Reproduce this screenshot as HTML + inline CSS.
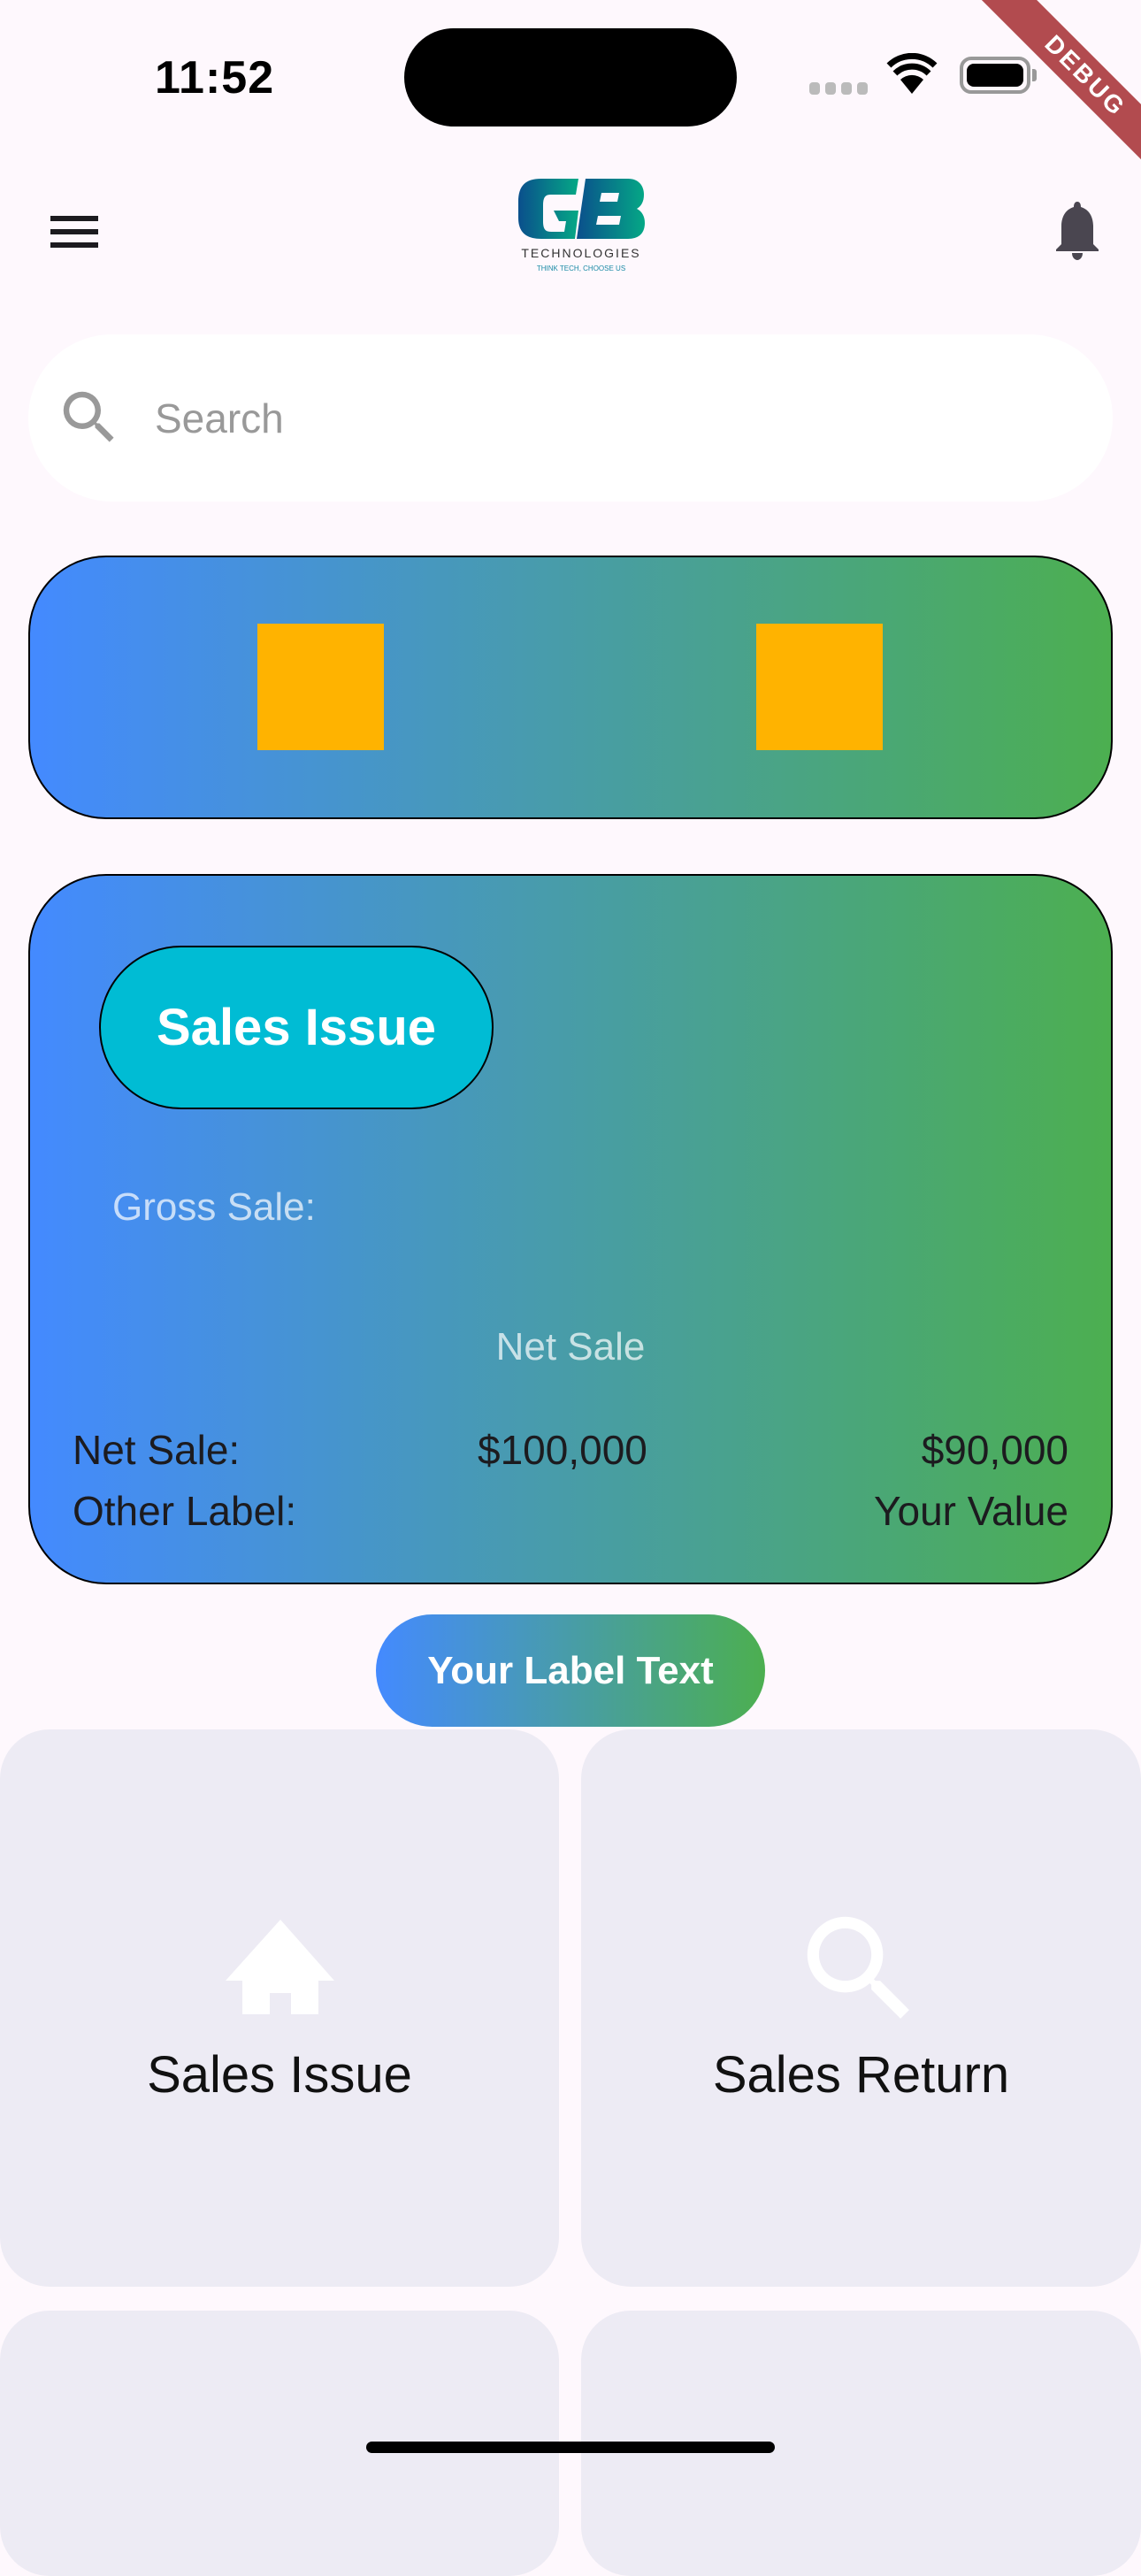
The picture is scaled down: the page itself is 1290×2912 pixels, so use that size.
<!DOCTYPE html>
<html><head><meta charset="utf-8"><style>
*{margin:0;padding:0;box-sizing:border-box}
body{width:1290px;height:2796px;background:#fef8fd;font-family:"Liberation Sans",sans-serif;position:relative;overflow:hidden}
.a{position:absolute}
.grad{background:linear-gradient(90deg,#448aff,#4caf50)}
.tile{position:absolute;background:#edebf4;border-radius:56px}
.tl{position:absolute;width:100%;text-align:center;font-size:58px;color:#111}
</style></head><body>
<div class="a" style="left:175px;top:58px;font-size:52px;font-weight:bold;color:#000;letter-spacing:1px">11:52</div>
<div class="a" style="left:457px;top:32px;width:376px;height:111px;background:#000;border-radius:56px"></div>
<div class="a" style="left:915px;top:93px;width:68px;height:14px;display:flex;gap:6px">
<div style="width:12px;height:14px;background:#bbb;border-radius:4px"></div><div style="width:12px;height:14px;background:#bbb;border-radius:4px"></div><div style="width:12px;height:14px;background:#bbb;border-radius:4px"></div><div style="width:12px;height:14px;background:#bbb;border-radius:4px"></div></div>
<svg class="a" style="left:1002px;top:60px" width="58" height="48" viewBox="0 0 58 48"><path d="M29 46 L16 30 A19 19 0 0 1 42 30 Z" fill="#000"/><path d="M10 23 A27 27 0 0 1 48 23" stroke="#000" stroke-width="7" fill="none"/><path d="M3 14 A37 37 0 0 1 55 14" stroke="#000" stroke-width="7" fill="none"/></svg>
<div class="a" style="left:1085px;top:64px;width:80px;height:42px;border:4px solid #999;border-radius:13px;padding:4px"><div style="width:100%;height:100%;background:#000;border-radius:8px"></div></div>
<div class="a" style="left:1167px;top:78px;width:5px;height:14px;background:#999;border-radius:0 3px 3px 0"></div>
<div class="a" style="left:1077px;top:64px;width:300px;height:44px;background:#b24b4f;transform:rotate(45deg);color:#fff;font-weight:bold;font-size:28px;text-align:center;line-height:44px;letter-spacing:3px">DEBUG</div>
<div class="a" style="left:57px;top:244px;width:54px;height:6px;background:#1c1b1f"></div>
<div class="a" style="left:57px;top:259px;width:54px;height:6px;background:#1c1b1f"></div>
<div class="a" style="left:57px;top:274px;width:54px;height:6px;background:#1c1b1f"></div>
<svg class="a" style="left:582px;top:200px" width="150" height="120" viewBox="0 0 150 120"><defs><linearGradient id="lg" x1="0" x2="1"><stop offset="0" stop-color="#0a4f8c"/><stop offset="1" stop-color="#05a886"/></linearGradient></defs>
<path d="M30 2 H72 L69 20 H40 C34 20 32 24 32 32 V50 C32 60 35 62 42 62 H56 L58 50 H50 L44 38 H72 L68 70 H30 C12 70 4 62 4 46 V28 C4 10 12 2 30 2Z" fill="url(#lg)"/>
<path d="M80 2 H128 C140 2 146 10 146 20 C146 28 143 33 138 36 C144 39 147 45 147 52 C147 64 140 70 128 70 H70 Z M98 18 L96 28 H116 L118 18 Z M94 44 L92 54 H118 L120 44 Z" fill="url(#lg)" fill-rule="evenodd"/>
<text x="75" y="91" font-size="14" text-anchor="middle" fill="#333" letter-spacing="2" font-family="Liberation Sans">TECHNOLOGIES</text>
<text x="75" y="106" font-size="8" text-anchor="middle" fill="#1a8aa6" font-family="Liberation Sans">THINK TECH, CHOOSE US</text></svg>
<svg class="a" style="left:1192px;top:228px" width="53" height="66" viewBox="0 0 53 66"><path d="M26 0 C29 0 30 3 30 6 C40 9 44 18 44 28 V48 L50 54 V56 H2 V54 L8 48 V28 C8 18 12 9 22 6 C22 3 23 0 26 0Z" fill="#4a4650"/><path d="M20 58 H32 C32 64 28 66 26 66 C24 66 20 64 20 58Z" fill="#4a4650"/></svg>
<div class="a" style="left:32px;top:378px;width:1226px;height:189px;background:#fff;border-radius:95px"></div>
<svg class="a" style="left:62px;top:433px" width="78" height="78" viewBox="0 0 24 24"><path d="M15.5 14h-.79l-.28-.27A6.47 6.470 0 0 0 16 9.5 6.5 6.5 0 1 0 9.5 16c1.61 0 3.09-.59 4.23-1.57l.27.28v.79l5 4.99L20.49 19l-4.99-5zm-6 0C7.01 14 5 11.99 5 9.5S7.01 5 9.5 5 14 7.01 14 9.5 11.99 14 9.5 14z" fill="#999"/></svg>
<div class="a" style="left:175px;top:446px;font-size:46px;color:#999">Search</div>
<div class="a grad" style="left:32px;top:628px;width:1226px;height:298px;border:2px solid #000;border-radius:88px"></div>
<div class="a" style="left:291px;top:705px;width:143px;height:143px;background:#ffb300"></div>
<div class="a" style="left:855px;top:705px;width:143px;height:143px;background:#ffb300"></div>
<div class="a grad" style="left:32px;top:988px;width:1226px;height:803px;border:2px solid #000;border-radius:88px"></div>
<div class="a" style="left:112px;top:1069px;width:446px;height:185px;background:#00bcd4;border:2px solid #000;border-radius:93px;color:#fff;font-weight:bold;font-size:58px;text-align:center;line-height:181px">Sales Issue</div>
<div class="a" style="left:127px;top:1340px;font-size:44px;color:rgba(255,255,255,0.7)">Gross Sale:</div>
<div class="a" style="left:0;width:1290px;top:1498px;font-size:44px;color:rgba(255,255,255,0.7);text-align:center">Net Sale</div>
<div class="a" style="left:82px;top:1612px;font-size:46px;color:#1c1b1f">Net Sale:</div>
<div class="a" style="left:540px;top:1612px;font-size:46px;color:#1c1b1f">$100,000</div>
<div class="a" style="right:82px;top:1612px;font-size:46px;color:#1c1b1f">$90,000</div>
<div class="a" style="left:82px;top:1681px;font-size:46px;color:#1c1b1f">Other Label:</div>
<div class="a" style="right:82px;top:1681px;font-size:46px;color:#1c1b1f">Your Value</div>
<div class="a grad" style="left:425px;top:1825px;width:440px;height:127px;border-radius:64px;color:#fff;font-weight:bold;font-size:44px;text-align:center;line-height:127px">Your Label Text</div>
<div class="tile" style="left:0;top:1955px;width:632px;height:630px"><svg class="a" style="left:255px;top:215px" width="123" height="107" viewBox="0 0 123 107"><path d="M62 0 L123 69 H105 V107 H74 V83 H50 V107 H19 V69 H0 Z" fill="#fff"/></svg><div class="tl" style="top:357px">Sales Issue</div></div>
<div class="tile" style="left:657px;top:1955px;width:633px;height:630px"><svg class="a" style="left:236px;top:192px" width="158" height="158" viewBox="0 0 24 24"><path d="M15.5 14h-.79l-.28-.27A6.47 6.47 0 0 0 16 9.5 6.5 6.5 0 1 0 9.5 16c1.61 0 3.09-.59 4.23-1.57l.27.28v.79l5 4.99L20.49 19l-4.99-5zm-6 0C7.01 14 5 11.99 5 9.5S7.01 5 9.5 5 14 7.01 14 9.5 11.99 14 9.5 14z" fill="#fff"/></svg><div class="tl" style="top:357px">Sales Return</div></div>
<div class="tile" style="left:0;top:2612px;width:632px;height:300px"></div>
<div class="tile" style="left:657px;top:2612px;width:633px;height:300px"></div>
<div class="a" style="left:414px;top:2760px;width:462px;height:13px;background:#000;border-radius:7px"></div>
</body></html>
